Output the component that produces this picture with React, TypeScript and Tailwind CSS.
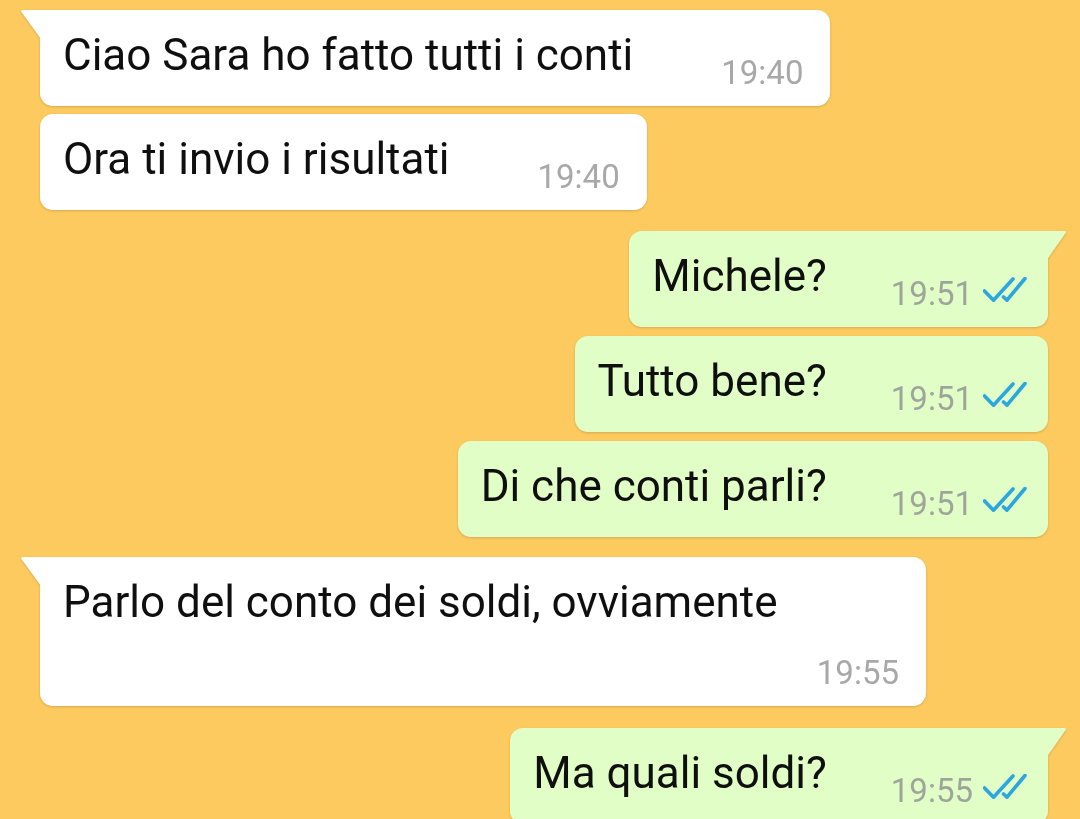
import React from "react";

type Msg = {
  out: boolean;
  tail: boolean;
  text: string;
  time: string;
  mt: string;
  wrap?: boolean;
};

const msgs: Msg[] = [
  { out: false, tail: true, text: "Ciao Sara ho fatto tutti i conti", time: "19:40", mt: "mt-[10px]" },
  { out: false, tail: false, text: "Ora ti invio i risultati", time: "19:40", mt: "mt-[8px]" },
  { out: true, tail: true, text: "Michele?", time: "19:51", mt: "mt-[21px]" },
  { out: true, tail: false, text: "Tutto bene?", time: "19:51", mt: "mt-[9px]" },
  { out: true, tail: false, text: "Di che conti parli?", time: "19:51", mt: "mt-[9px]" },
  { out: false, tail: true, text: "Parlo del conto dei soldi, ovviamente", time: "19:55", mt: "mt-[20px]", wrap: true },
  { out: true, tail: true, text: "Ma quali soldi?", time: "19:55", mt: "mt-[22px]" },
];

function Checks() {
  return (
    <svg width="44" height="26" viewBox="0 0 44 26" className="mt-[3px] ml-[10px] shrink-0">
      <path d="M1.5 14 L10.5 23.2 L30 2" fill="none" stroke="#2ba6df" strokeWidth="3.6" strokeLinecap="round" strokeLinejoin="round" />
      <path d="M20.5 20 L24 23.2 L42 1.5" fill="none" stroke="#2ba6df" strokeWidth="3.6" strokeLinecap="round" strokeLinejoin="round" />
    </svg>
  );
}

function Bubble({ m }: { m: Msg }) {
  const bg = m.out ? "bg-[#e2fec7]" : "bg-white";
  const fill = m.out ? "#e2fec7" : "#ffffff";
  const corner = m.tail ? (m.out ? "rounded-[13px] rounded-tr-none" : "rounded-[13px] rounded-tl-none") : "rounded-[13px]";
  const timeColor = m.out ? "text-[#9ea69b]" : "text-[#a8a8a8]";
  return (
    <div
      className={`${m.mt} relative ${m.out ? "self-end mr-[32px]" : "self-start ml-[40px]"} drop-shadow-[0_1px_0.8px_rgba(0,0,0,0.16)]`}
    >
      {m.tail && !m.out && (
        <svg width="21" height="29" viewBox="0 0 21 29" className="absolute left-[-20px] top-0">
          <path d="M21 0 H3 Q0 0 1.8 2.5 L21 29 Z" fill={fill} />
        </svg>
      )}
      {m.tail && m.out && (
        <svg width="21" height="30" viewBox="0 0 21 30" className="absolute right-[-19px] top-0">
          <path d="M0 0 H18 Q21 0 19.3 2.5 L0 30 Z" fill={fill} />
        </svg>
      )}
      <div
        className={`${bg} ${corner} pl-[23px] pt-[19px] pb-[14px] ${m.out ? "pr-[21px]" : "pr-[27px]"} ${
          m.wrap ? "w-[886px]" : "flex items-start"
        }`}
      >
        <span className="text-[44px] leading-[52px] text-[#0f0f0f] whitespace-nowrap">{m.text}</span>
        <div
          className={`flex items-start ${m.wrap ? "justify-end mt-[25px]" : `mt-[24px] ${m.out ? "ml-[64px]" : "ml-[88px]"}`}`}
        >
          <span className={`text-[33px] leading-[39px] ${timeColor} whitespace-nowrap`}>{m.time}</span>
          {m.out && <Checks />}
        </div>
      </div>
    </div>
  );
}

export default function App() {
  return (
    <div
      className="w-[1080px] h-[819px] overflow-hidden bg-[#fdca5f] flex flex-col"
      style={{ fontFamily: "Roboto, 'Noto Sans', sans-serif" }}
    >
      {msgs.map((m, i) => (
        <Bubble key={i} m={m} />
      ))}
    </div>
  );
}
